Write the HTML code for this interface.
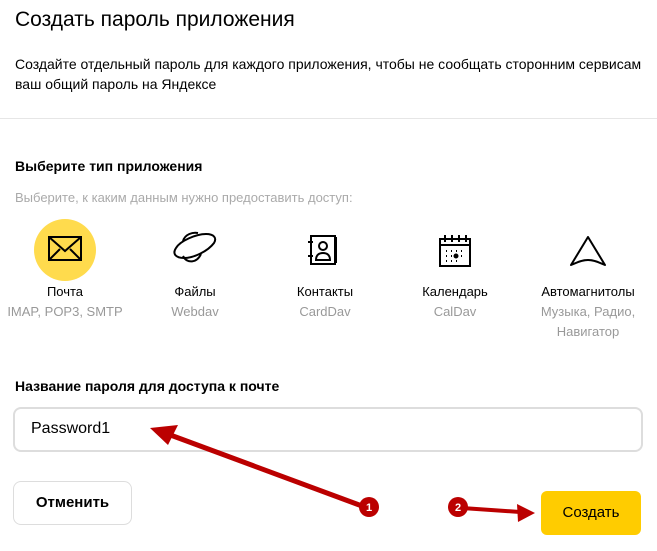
<!DOCTYPE html>
<html><head><meta charset="utf-8"><style>
body{margin:0;width:657px;height:551px;background:#fff;font-family:"Liberation Sans",sans-serif;color:#000;position:relative;overflow:hidden}
.a{position:absolute;white-space:nowrap}
.lbl{position:absolute;text-align:center;width:130px;font-size:13px;line-height:20px}
.g{color:#999}
</style></head><body>
<div class="a" style="left:15px;top:8px;font-size:21px">Создать пароль приложения</div>
<div class="a" style="left:15px;top:54px;font-size:14px;line-height:20px">Создайте отдельный пароль для каждого приложения, чтобы не сообщать сторонним сервисам<br>ваш общий пароль на Яндексе</div>
<div class="a" style="left:0;top:118px;width:657px;height:1px;background:#e6e6e6"></div>
<div class="a" style="left:15px;top:158px;font-size:14px;font-weight:bold">Выберите тип приложения</div>
<div class="a g" style="left:15px;top:190px;font-size:13px;color:#aaa">Выберите, к каким данным нужно предоставить доступ:</div>
<div class="a" style="left:34px;top:219px;width:62px;height:62px;border-radius:50%;background:#ffdb4d"></div>
<svg class="a" style="left:0;top:210px" width="657" height="70" fill="none" stroke="#000" stroke-width="2">
<rect x="37" y="26" width="28" height="26" transform="translate(12,0)" style="display:none"/>
<rect x="49" y="27" width="32" height="23"/><path d="M49 27l16 14 16-14M49 50l11-11M81 50l-11-11"/>
<path d="M176 38c-4 6 0 10 8 10 10 0 24-7 30-15 3-5 0-9-8-9-10 0-26 7-30 14z"/><path d="M183 31c2-7 10-9 15-8M183 46c4 8 14 7 18-2"/>
<rect x="311" y="26" width="24" height="28"/><path d="M336 27v26M308 32h5M308 46h5"/><circle cx="323" cy="36" r="4"/><path d="M316 50c0-5 3-7 7-7s7 2 7 7z"/>
<rect x="440" y="29" width="30" height="27"/><path d="M440 35h30M445 25v7M452 25v7M459 25v7M466 25v7"/><path d="M446 41h1M451 41h1M456 41h1M461 41h1M446 46h1M451 46h1M461 46h1M446 51h1M451 51h1M456 51h1" stroke-width="2"/><circle cx="456" cy="46" r="1.5" fill="#000"/>
<path d="M588 27l-17 28c5-2 10-5 17-5s12 3 17 5z" stroke-linejoin="round"/>
</svg>
<div class="lbl" style="left:0;top:282px">Почта<br><span class="g">IMAP, POP3, SMTP</span></div>
<div class="lbl" style="left:130px;top:282px">Файлы<br><span class="g">Webdav</span></div>
<div class="lbl" style="left:260px;top:282px">Контакты<br><span class="g">CardDav</span></div>
<div class="lbl" style="left:390px;top:282px">Календарь<br><span class="g">CalDav</span></div>
<div class="lbl" style="left:523px;top:282px">Автомагнитолы<br><span class="g">Музыка, Радио,<br>Навигатор</span></div>
<div class="a" style="left:15px;top:378px;font-size:14px;font-weight:bold">Название пароля для доступа к почте</div>
<div class="a" style="left:13px;top:407px;width:626px;height:41px;border:2px solid #ddd;border-radius:8px"></div>
<div class="a" style="left:31px;top:420px;font-size:16px">Password1</div>
<div class="a" style="left:13px;top:481px;width:117px;height:42px;border:1px solid #ddd;border-radius:8px;text-align:center;line-height:42px;font-size:15px;font-weight:bold">Отменить</div>
<div class="a" style="left:541px;top:491px;width:100px;height:44px;background:#fc0;border-radius:6px;text-align:center;line-height:44px;font-size:15px">Создать</div>
<svg class="a" style="left:0;top:400px" width="657" height="151">
<path d="M362 106L165 33" stroke="#b00" stroke-width="5"/><path d="M150 28l28-3-10 20z" fill="#b00"/>
<path d="M462 108L520 112" stroke="#b00" stroke-width="4"/><path d="M535 113l-18-9 1 18z" fill="#b00"/>
<circle cx="369" cy="107" r="10" fill="#b00"/><text x="369" y="111" fill="#fff" font-size="11" font-weight="bold" text-anchor="middle" font-family="Liberation Sans">1</text>
<circle cx="458" cy="107" r="10" fill="#b00"/><text x="458" y="111" fill="#fff" font-size="11" font-weight="bold" text-anchor="middle" font-family="Liberation Sans">2</text>
</svg>
</body></html>
